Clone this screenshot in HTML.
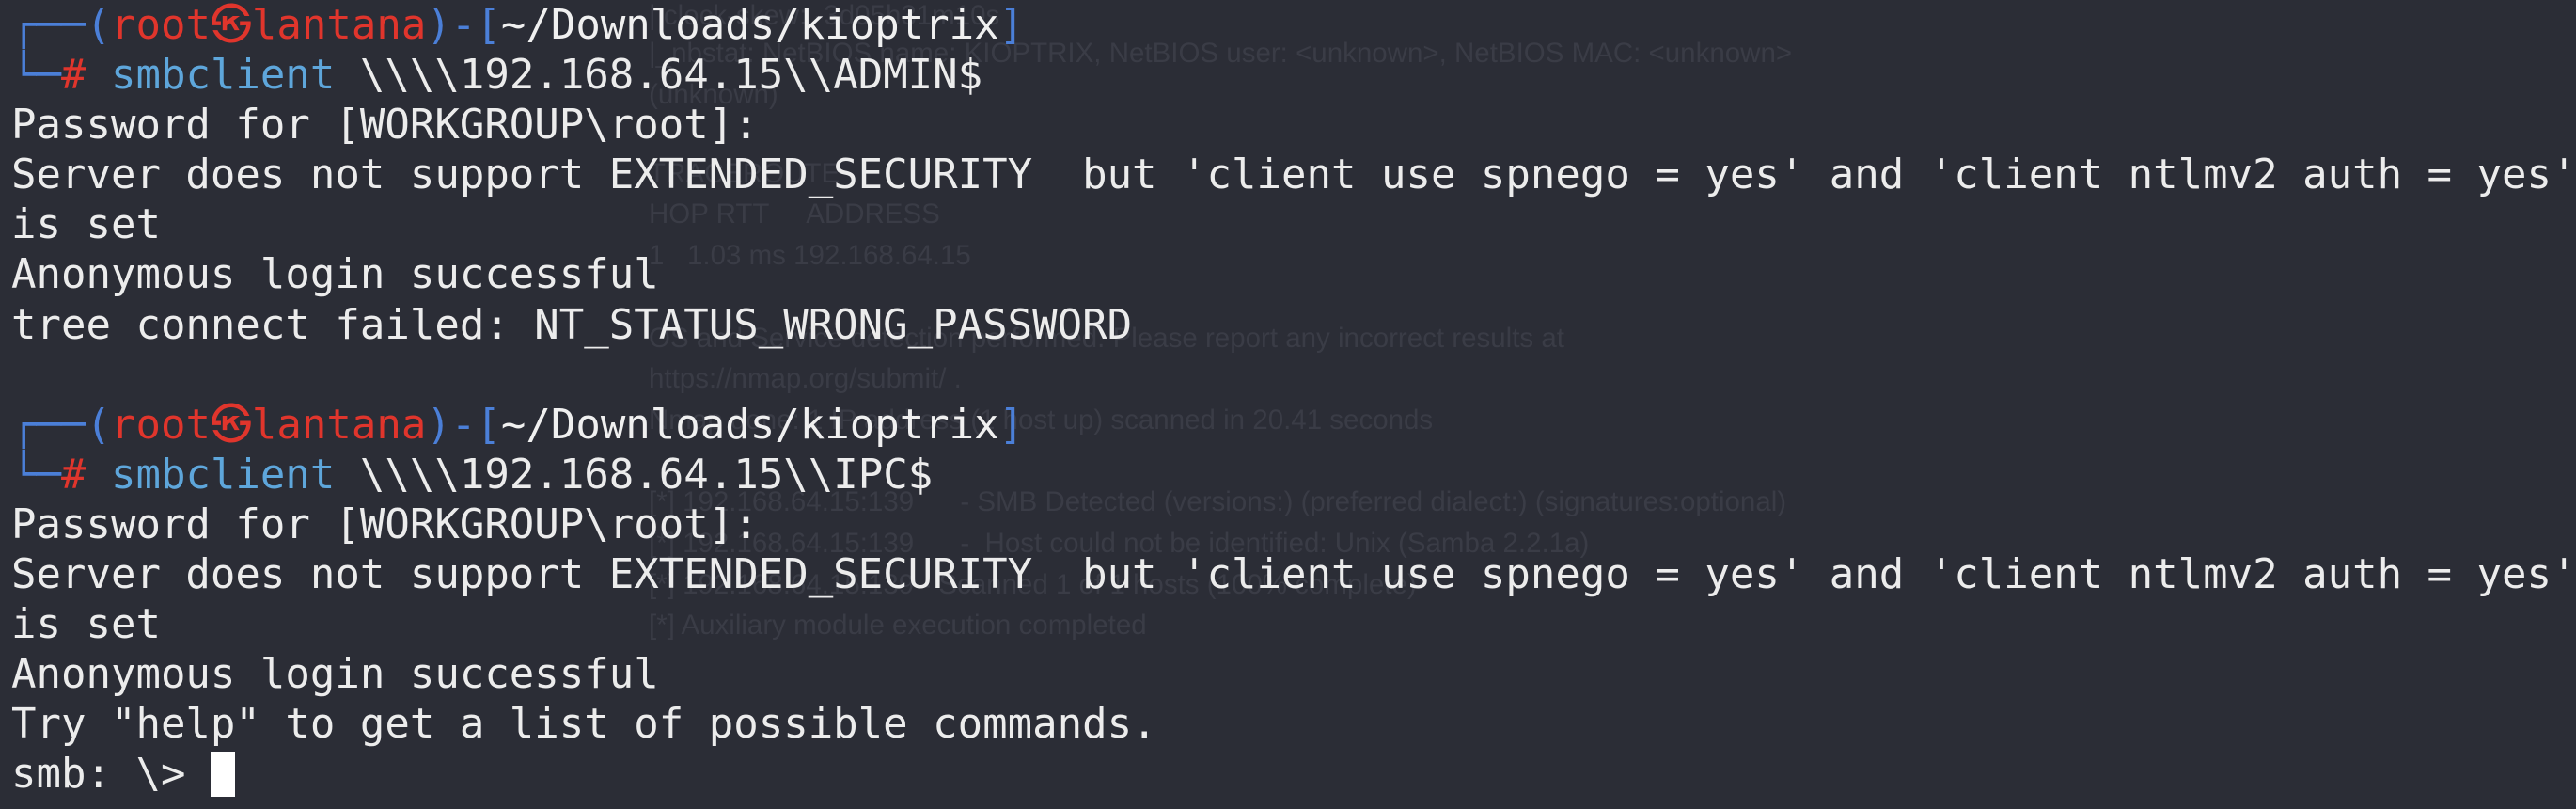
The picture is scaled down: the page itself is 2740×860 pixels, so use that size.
<!DOCTYPE html>
<html><head><meta charset="utf-8"><style>
html,body{margin:0;padding:0;background:#2b2d36;width:2740px;height:860px;overflow:hidden;position:relative}
.bg{position:absolute;left:690px;font-family:"Liberation Sans",sans-serif;font-size:29.5px;color:#3a3c46;white-space:pre;line-height:30px}
.term{position:absolute;left:12px;top:0;font-family:"DejaVu Sans Mono","Liberation Mono",monospace;font-size:44px;line-height:53.1px;color:#ececec;white-space:pre}
.b{color:#4b7fd8}.r{color:#e0352c}.c{color:#5ea6db}.w{color:#f0f0f0}
.cur{position:absolute;left:224px;top:799px;width:26px;height:48px;background:#fff}
</style></head><body>
<div class="bg" style="top:2px">| clock-skew: -3d05h31m10s</div>
<div class="bg" style="top:42px">|_nbstat: NetBIOS name: KIOPTRIX, NetBIOS user: &lt;unknown&gt;, NetBIOS MAC: &lt;unknown&gt;</div>
<div class="bg" style="top:86px">(unknown)</div>
<div class="bg" style="top:170px">TRACEROUTE</div>
<div class="bg" style="top:213px">HOP RTT     ADDRESS</div>
<div class="bg" style="top:257px">1   1.03 ms 192.168.64.15</div>
<div class="bg" style="top:345px">OS and Service detection performed. Please report any incorrect results at</div>
<div class="bg" style="top:388px">https://nmap.org/submit/ .</div>
<div class="bg" style="top:432px">Nmap done: 1 IP address (1 host up) scanned in 20.41 seconds</div>
<div class="bg" style="top:519px">[*] 192.168.64.15:139      - SMB Detected (versions:) (preferred dialect:) (signatures:optional)</div>
<div class="bg" style="top:563px">[*] 192.168.64.15:139      -  Host could not be identified: Unix (Samba 2.2.1a)</div>
<div class="bg" style="top:607px">[*] 192.168.64.15:139 - Scanned 1 of 1 hosts (100% complete)</div>
<div class="bg" style="top:650px">[*] Auxiliary module execution completed</div>
<div class="term"><span class="b">┌──(</span><span class="r">root㉿lantana</span><span class="b">)-[</span><span class="w">~/Downloads/kioptrix</span><span class="b">]</span>
<span class="b">└─</span><span class="r">#</span> <span class="c">smbclient</span> \\\\192.168.64.15\\ADMIN$
Password for [WORKGROUP\root]:
Server does not support EXTENDED_SECURITY  but 'client use spnego = yes' and 'client ntlmv2 auth = yes'
is set
Anonymous login successful
tree connect failed: NT_STATUS_WRONG_PASSWORD

<span class="b">┌──(</span><span class="r">root㉿lantana</span><span class="b">)-[</span><span class="w">~/Downloads/kioptrix</span><span class="b">]</span>
<span class="b">└─</span><span class="r">#</span> <span class="c">smbclient</span> \\\\192.168.64.15\\IPC$
Password for [WORKGROUP\root]:
Server does not support EXTENDED_SECURITY  but 'client use spnego = yes' and 'client ntlmv2 auth = yes'
is set
Anonymous login successful
Try "help" to get a list of possible commands.
smb: \&gt; </div>
<div class="cur"></div>
</body></html>
